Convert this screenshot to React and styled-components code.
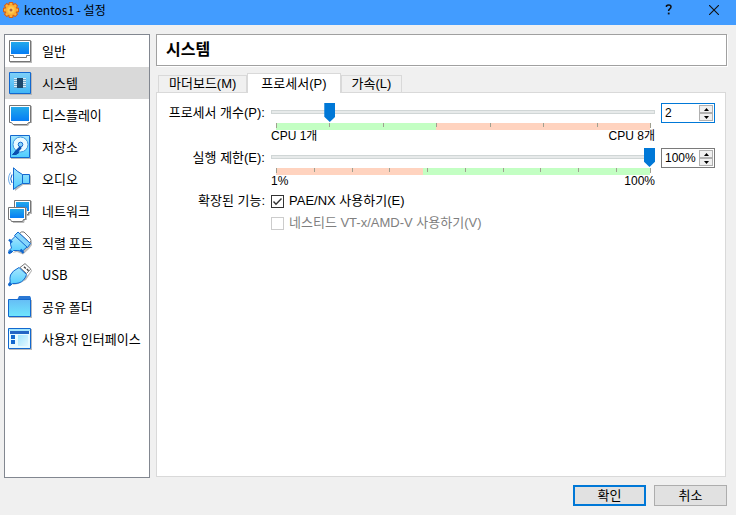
import React, { useState } from 'react'
import styled, { createGlobalStyle } from 'styled-components'

const Colors = {
    TITLE: '#429cff',
    WINDOW: '#f0f0f0',
    ACCENT: '#0078d7',
    GREEN: '#c3ffc3',
    RED: '#ffd3bf',
    LINE: '#d9d9d9',
}

const GREY = '#757575'
const BLUE = '#1268cf'

const TABS = [
    { id: 'motherboard', title: '마더보드(M)' },
    { id: 'processor', title: '프로세서(P)' },
    { id: 'acceleration', title: '가속(L)' },
]

const SECTIONS = [
    { id: 'general', title: '일반', icon: <GeneralIcon /> },
    { id: 'system', title: '시스템', icon: <SystemIcon /> },
    { id: 'display', title: '디스플레이', icon: <DisplayIcon /> },
    { id: 'storage', title: '저장소', icon: <StorageIcon /> },
    { id: 'audio', title: '오디오', icon: <AudioIcon /> },
    { id: 'network', title: '네트워크', icon: <NetworkIcon /> },
    { id: 'serial', title: '직렬 포트', icon: <SerialIcon /> },
    { id: 'usb', title: 'USB', icon: <UsbIcon /> },
    { id: 'shared', title: '공유 폴더', icon: <FolderIcon /> },
    { id: 'ui', title: '사용자 인터페이스', icon: <InterfaceIcon /> },
]

const CPU_TICKS = [1, 2, 3, 4, 5, 6, 7, 8]
const CAP_TICKS = [1, 11, 21, 31, 41, 51, 61, 71, 81, 91, 100]

export default function App() {
    const [section, setSection] = useState('system')
    const [tab, setTab] = useState('processor')
    const [cpus, setCpus] = useState(2)
    const [cap, setCap] = useState(100)
    const [pae, setPae] = useState(true)

    return (
        <Window>
            <GlobalStyle />
            <Gradients />
            <TitleBar>
                <GearIcon />
                <Caption>kcentos1 - 설정</Caption>
                <TitleButton aria-label="도움말">
                    <svg width="8" height="11" viewBox="0 0 8 11" fill="none" stroke="#111" strokeWidth="1.5">
                        <path d="M1.5 3V1.8Q2.2 1 3.8 1Q6 1 6 2.8Q6 4 4.8 4.8Q3.6 5.6 3.6 7" />
                        <path d="M2.8 9.5h1.8" strokeWidth="1.8" />
                    </svg>
                </TitleButton>
                <TitleButton aria-label="닫기">
                    <svg width="10" height="10" viewBox="0 0 10 10" stroke="#111" strokeWidth="1.1">
                        <path d="M0 0L10 10M10 0L0 10" />
                    </svg>
                </TitleButton>
            </TitleBar>

            <Main>
                <Sidebar>
                    {SECTIONS.map(item => (
                        <SectionButton
                            key={item.id}
                            $active={item.id === section}
                            aria-current={item.id === section}
                            onClick={() => setSection(item.id)}
                        >
                            {item.icon}
                            {item.title}
                        </SectionButton>
                    ))}
                </Sidebar>

                <Content>
                    <Heading>시스템</Heading>
                    <TabList role="tablist">
                        {TABS.map(item => (
                            <Tab
                                key={item.id}
                                role="tab"
                                aria-selected={item.id === tab}
                                $active={item.id === tab}
                                onClick={() => setTab(item.id)}
                            >
                                {item.title}
                            </Tab>
                        ))}
                    </TabList>
                    <Panel role="tabpanel">
                        <RangeRow
                            id="cpus"
                            label="프로세서 개수(P):"
                            min={1}
                            max={8}
                            value={cpus}
                            onChange={setCpus}
                            ticks={CPU_TICKS}
                            limit={4}
                            colors={[Colors.GREEN, Colors.RED]}
                            minLabel="CPU 1개"
                            maxLabel="CPU 8개"
                            focused
                        />
                        <RangeRow
                            id="cap"
                            label="실행 제한(E):"
                            min={1}
                            max={100}
                            value={cap}
                            onChange={setCap}
                            ticks={CAP_TICKS}
                            limit={40}
                            colors={[Colors.RED, Colors.GREEN]}
                            minLabel="1%"
                            maxLabel="100%"
                            suffix="%"
                        />
                        <Row>
                            <RowTitle>확장된 기능:</RowTitle>
                            <Options>
                                <Option>
                                    <CheckBox checked={pae} onChange={e => setPae(e.target.checked)} />
                                    PAE/NX 사용하기(E)
                                </Option>
                                <Option $disabled>
                                    <CheckBox disabled />
                                    네스티드 VT-x/AMD-V 사용하기(V)
                                </Option>
                            </Options>
                        </Row>
                    </Panel>
                </Content>
            </Main>

            <Footer>
                <DialogButton $primary>확인</DialogButton>
                <DialogButton>취소</DialogButton>
            </Footer>
        </Window>
    )
}

function RangeRow({
    id,
    label,
    min,
    max,
    value,
    onChange,
    ticks,
    limit,
    colors,
    minLabel,
    maxLabel,
    suffix = '',
    focused,
}) {
    const percent = (v) => (v - min) / (max - min) * 100
    const change = (v) => {
        const next = Number.isNaN(v) ? min : v
        onChange(Math.min(max, Math.max(min, next)))
    }

    return (
        <Row>
            <RowLabel htmlFor={id}>{label}</RowLabel>
            <div>
                <Slider
                    id={id}
                    min={min}
                    max={max}
                    value={value}
                    onChange={e => change(Number(e.target.value))}
                />
                <Scale style={{ background: `linear-gradient(90deg, ${colors[0]} ${percent(limit)}%, ${colors[1]} 0)` }}>
                    {ticks.map(tick => (
                        <Tick
                            key={tick}
                            $long={tick === min || tick === max}
                            style={{ left: `${percent(tick)}%` }}
                        />
                    ))}
                </Scale>
                <Limits>
                    <span>{minLabel}</span>
                    <span>{maxLabel}</span>
                </Limits>
            </div>
            <SpinBox $focused={focused}>
                <SpinInput
                    aria-label={label}
                    value={`${value}${suffix}`}
                    onChange={e => change(parseInt(e.target.value, 10))}
                />
                <Steps>
                    <Step aria-label="증가" onClick={() => change(value + 1)}>
                        <svg width="5" height="3" viewBox="0 0 5 3"><path d="M0 3L2.5 0L5 3z" /></svg>
                    </Step>
                    <Step aria-label="감소" onClick={() => change(value - 1)}>
                        <svg width="5" height="3" viewBox="0 0 5 3"><path d="M0 0L2.5 3L5 0z" /></svg>
                    </Step>
                </Steps>
            </SpinBox>
        </Row>
    )
}

function CheckBox(props) {
    return (
        <CheckHolder>
            <CheckInput {...props} />
            {props.checked && (
                <CheckMark viewBox="0 0 13 13">
                    <path d="M2.5 6.5L5 9.2L10.5 3.5" fill="none" stroke="#333" strokeWidth="1.4" />
                </CheckMark>
            )}
        </CheckHolder>
    )
}

function Gradients() {
    return (
        <Defs aria-hidden="true">
            <defs>
                <linearGradient id="screen" x1="0" y1="0" x2="0" y2="1">
                    <stop offset="0" stopColor="#22a9ea" />
                    <stop offset="1" stopColor="#067df5" />
                </linearGradient>
                <linearGradient id="sky" x1="0" y1="0" x2="0" y2="1">
                    <stop offset="0" stopColor="#7fd0f8" />
                    <stop offset="1" stopColor="#3fb6f6" />
                </linearGradient>
                <linearGradient id="cyan" x1="0" y1="0" x2="0" y2="1">
                    <stop offset="0" stopColor="#a6e6fd" />
                    <stop offset="1" stopColor="#4fcdff" />
                </linearGradient>
                <linearGradient id="folder" x1="0" y1="0" x2="0" y2="1">
                    <stop offset="0" stopColor="#66bdf5" />
                    <stop offset="1" stopColor="#6fe6fd" />
                </linearGradient>
                <linearGradient id="pane" x1="0" y1="0" x2="1" y2="1">
                    <stop offset="0" stopColor="#9fe4fd" />
                    <stop offset="1" stopColor="#e2f7ff" />
                </linearGradient>
                <radialGradient id="gear">
                    <stop offset="0" stopColor="#ffe58a" />
                    <stop offset="0.6" stopColor="#ffc341" />
                    <stop offset="1" stopColor="#f9a02c" />
                </radialGradient>
            </defs>
        </Defs>
    )
}

function GearIcon() {
    return (
        <svg width="18" height="18" viewBox="0 0 18 18">
            <circle cx="9" cy="9" r="7" fill="#d4601a" />
            <g stroke="#d4601a" strokeWidth="4.4">
                <path d="M9 1V17M1 9H17M3.3 3.3L14.7 14.7M14.7 3.3L3.3 14.7" />
            </g>
            <g stroke="#ffb638" strokeWidth="2.6">
                <path d="M9 2V16M2 9H16M4 4L14 14M14 4L4 14" />
            </g>
            <circle cx="9" cy="9" r="5.6" fill="url(#gear)" />
            <circle cx="9" cy="9" r="1.5" fill="#b9683a" />
        </svg>
    )
}

function GeneralIcon() {
    return (
        <Icon>
            <path d="M2 2h22v22H2z" fill="#bbb" />
            <path d="M1.5 1.5h21v21h-21z" fill="#fff" stroke={GREY} />
            <path d="M3 3h18v12H3z" fill="url(#screen)" />
            <path d="M1.5 16.5H5.5V18.5H18.5V16.5H22.5" fill="none" stroke={GREY} />
        </Icon>
    )
}

function SystemIcon() {
    return (
        <Icon>
            <path d="M2 2h22v22H2z" fill="#b5b5b5" />
            <path d="M1.5 1.5h21v21h-21z" fill="url(#sky)" stroke={BLUE} />
            <path d="M6 7.5h12M6 9.5h12M6 11.5h12M6 13.5h12M6 15.5h12" stroke="#d9eaf4" />
            <path d="M6 8.5h12M6 10.5h12M6 12.5h12M6 14.5h12M6 16.5h12" stroke="#6fa9cc" />
            <path d="M9 7h6v10H9z" fill="#1c476b" />
        </Icon>
    )
}

function DisplayIcon() {
    return (
        <Icon>
            <path d="M2 3h22v17h-2l-2 3H6z" fill="#bbb" />
            <path d="M1.5 2.5h21v17h-2l-1.5 2h-14l-1.5 -2h-2z" fill="#fff" stroke={GREY} />
            <path d="M3 4h18v14H3z" fill="url(#screen)" />
        </Icon>
    )
}

function StorageIcon() {
    return (
        <Icon>
            <path d="M3 2h20v22H3z" fill="#bbb" />
            <path d="M2.5 .5h19v22h-19z" fill="url(#cyan)" stroke={BLUE} />
            <circle cx="12.5" cy="9.5" r="7.5" fill="#e8faff" stroke="#3d97e0" />
            <circle cx="12.5" cy="9.5" r="2.3" fill="#8ad5fa" stroke={BLUE} />
            <path d="M12 13L8 17" stroke="#0b4fb0" strokeWidth="3" strokeLinecap="round" />
            <path d="M8.5 15.5L4.5 19.5H8L11 17.5z" fill="#0b4fb0" stroke="#0b4fb0" strokeLinejoin="round" />
        </Icon>
    )
}

function AudioIcon() {
    return (
        <Icon>
            <path d="M7 2L15 8.5H23V18H15L7 24z" fill="#bbb" />
            <path d="M5.5 .8Q9 4.5 14.5 7.5H21.5V16.5H14.5Q9 19 5.5 22.5z" fill="url(#cyan)" stroke={BLUE} />
            <path d="M14.5 7.5V16.5" stroke={BLUE} />
            <path d="M4 7.5Q1.5 12 4 16" fill="none" stroke={BLUE} />
            <path d="M2.5 5.5Q-1.5 12 2.5 18" fill="none" stroke="#6aa9e8" />
        </Icon>
    )
}

function NetworkIcon() {
    return (
        <Icon>
            <path d="M7 2h17v13h-2l-1 2H9z" fill="#bbb" />
            <path d="M6.5 1.5h16v12h-2v2h-14z" fill="#fff" stroke={GREY} />
            <path d="M8 3h13v9H8z" fill="url(#screen)" />
            <path d="M1 9h18v12h-2l-1 3H5z" fill="#bbb" />
            <path d="M.5 8.5h17v12h-2l-1 2h-11l-1-2h-2z" fill="#fff" stroke={GREY} />
            <path d="M2 10h14v9H2z" fill="url(#screen)" />
        </Icon>
    )
}

function SerialIcon() {
    return (
        <Icon>
            <path d="M4 22L9 21L15 23.5L21 18L24 14V10z" fill="#bbb" />
            <path d="M11.5 2.5Q13.5 0 16 1L22 7Q24 9.5 22 12z" fill="#fff" stroke={GREY} />
            <path d="M7.5 5L2.5 10Q2 13 3.5 17L1 19.5V22H3L5.5 19.5Q10 19 14 20.5L19.5 15.5z" fill="url(#cyan)" stroke={BLUE} />
            <path d="M6.5 4.5L10 1L22.5 12.5L19.5 16.5z" fill="#86d5fc" stroke={BLUE} strokeLinejoin="round" />
            <path d="M1 8.5L4 11.5M12.5 18.5L15.5 22M.5 22.5L3.5 19.5" stroke={BLUE} strokeWidth="2.4" />
        </Icon>
    )
}

function UsbIcon() {
    return (
        <Icon>
            <path d="M4 22L10 21L18 17L24 8V6L20 12z" fill="#bbb" />
            <path d="M12 4.5L17 .6L22.8 6L18.5 10.5z" fill="#fff" stroke={GREY} strokeLinejoin="round" />
            <path d="M16 3.7l1.8 1.8M18.8 6l1.8 1.8" stroke="#444" strokeWidth="1.5" />
            <path d="M11 4.5Q4 8 2.5 12Q1.5 15 2.2 19L.8 21L2.5 22.5L4.5 20.5Q12 21 15.5 17Q18 14 18.5 11.5z" fill="url(#cyan)" stroke={BLUE} strokeLinejoin="round" />
            <path d="M.5 22.5L3 20" stroke={BLUE} strokeWidth="2.5" />
        </Icon>
    )
}

function FolderIcon() {
    return (
        <Icon>
            <path d="M1 5h23v18H1z" fill="#bbb" />
            <path d="M9 5L11 1H22L23 3V6H9z" fill="#2b78d4" />
            <path d="M.5 4.5h22v17H.5z" fill="url(#folder)" stroke={BLUE} />
        </Icon>
    )
}

function InterfaceIcon() {
    return (
        <Icon>
            <path d="M1 2h23v21H1z" fill="#bbb" />
            <path d="M.5 1.5h22v20H.5z" fill="#e6faff" stroke={BLUE} />
            <path d="M1 2h21v2H1z" fill="#a5e6fc" />
            <path d="M2 4h19v3H2z" fill="#2365c4" />
            <path d="M3 8h4v4H3zM3 13h4v4H3z" fill={BLUE} />
            <path d="M10 8h10v11H10z" fill="url(#pane)" />
        </Icon>
    )
}

const GlobalStyle = createGlobalStyle`
    * {
        box-sizing: border-box;
    }

    body {
        margin: 0;
        background: ${Colors.WINDOW};
    }

    body, button, input {
        color: #000;
        font-family: 'Liberation Sans', 'Noto Sans CJK KR', sans-serif;
        font-size: 13px;
        line-height: 16px;
    }
`

const Window = styled.div`
    min-height: 100vh;
    display: flex;
    flex-direction: column;
    background: ${Colors.WINDOW};
`

const Defs = styled.svg`
    position: absolute;
    width: 0;
    height: 0;
`

const TitleBar = styled.header`
    height: 25px;
    padding: 0 0 6px 2px;
    display: flex;
    align-items: center;
    background: ${Colors.TITLE};
`

const Caption = styled.h1`
    flex: 1;
    margin: 0 0 0 4px;
    font-family: 'Noto Sans CJK KR', sans-serif;
    font-size: 12px;
    font-weight: 400;
`

const TitleButton = styled.button`
    width: 45px;
    padding: 0;
    border: 0;
    display: flex;
    justify-content: center;
    background: none;
`

const Main = styled.main`
    flex: 1;
    padding: 9px 9px 0 4px;
    display: flex;
    gap: 6px;
`

const Sidebar = styled.nav`
    width: 146px;
    border: 1px solid #828790;
    background: #fff;
`

const SectionButton = styled.button`
    width: 100%;
    height: 32px;
    padding: 0 3px;
    border: 0;
    display: flex;
    align-items: center;
    gap: 10px;
    background: ${props => props.$active ? '#d9d9d9' : 'none'};
    font-family: 'Noto Sans CJK KR', sans-serif;
    text-align: left;
    white-space: nowrap;
`

const Icon = styled.svg.attrs({
    viewBox: '0 0 24 24',
})`
    width: 24px;
    height: 24px;
    flex: none;
`

const Content = styled.section`
    flex: 1;
    min-width: 0;
    display: flex;
    flex-direction: column;
`

const Heading = styled.h2`
    height: 32px;
    margin: 0 0 7px;
    padding: 0 9px;
    border: 1px solid #a0a0a0;
    background: #fff;
    box-shadow: 1px 1px 0 #fff;
    font-size: 16px;
    line-height: 30px;
`

const TabList = styled.div`
    padding-left: 2px;
    display: flex;
    align-items: flex-end;
`

const Tab = styled.button`
    height: ${props => props.$active ? 20 : 17}px;
    padding: ${props => props.$active ? '0 13px' : '0 10px'};
    margin-bottom: ${props => props.$active ? -1 : 0}px;
    border: 1px solid ${Colors.LINE};
    border-bottom: 0;
    background: ${props => props.$active ? '#fff' : Colors.WINDOW};
    z-index: ${props => props.$active ? 1 : 0};

    & + & {
        border-left-width: ${props => props.$active ? 1 : 0}px;
    }
`

const Panel = styled.div`
    flex: 1;
    margin: 0 1px 1px 0;
    padding: 10px;
    border: 1px solid ${Colors.LINE};
    display: flex;
    flex-direction: column;
    gap: 6px;
    background: #fff;
`

const Row = styled.div`
    display: grid;
    grid-template-columns: 98px 1fr 54px;
    gap: 6px;
    align-items: start;
`

const RowLabel = styled.label`
    line-height: 20px;
    text-align: right;
    white-space: nowrap;
`

const RowTitle = styled.span`
    text-align: right;
`

const Slider = styled.input.attrs({
    type: 'range',
})`
    appearance: none;
    display: block;
    width: 100%;
    height: 18px;
    margin: 0 0 2px;
    background: none;

    &::-webkit-slider-runnable-track {
        height: 4px;
        background: #e7eaea;
        box-shadow: inset 0 0 0 1px #d0d6d6;
    }

    &::-webkit-slider-thumb {
        appearance: none;
        width: 11px;
        height: 19px;
        margin-top: -7px;
        background: ${Colors.ACCENT};
        clip-path: polygon(0 0, 100% 0, 100% 72%, 50% 100%, 0 72%);
    }
`

const Scale = styled.div`
    position: relative;
    height: 7px;
    margin: 0 5px;
`

const Tick = styled.i`
    position: absolute;
    top: 0;
    width: 1px;
    height: ${props => props.$long ? 5 : 4}px;
    background: #a0a090;
`

const Limits = styled.div`
    display: flex;
    justify-content: space-between;
    font-size: 12px;
    line-height: 12px;
`

const SpinBox = styled.div`
    height: 20px;
    padding: 1px;
    border: 1px solid ${props => props.$focused ? Colors.ACCENT : '#7a7a7a'};
    display: flex;
    background: #fff;
`

const SpinInput = styled.input`
    flex: 1;
    min-width: 0;
    padding: 0 0 0 2px;
    border: 0;
    outline: 0;
    font-size: 12px;
`

const Steps = styled.div`
    width: 14px;
    display: flex;
    flex-direction: column;
`

const Step = styled.button`
    flex: 1;
    padding: 0;
    border: 1px solid #b0b0b0;
    display: flex;
    align-items: center;
    justify-content: center;
    background: ${Colors.WINDOW};
`

const Options = styled.div`
    display: flex;
    flex-direction: column;
    gap: 6px;
`

const Option = styled.label`
    display: flex;
    align-items: center;
    gap: 5px;
    color: ${props => props.$disabled ? '#7f7f7f' : '#000'};
    white-space: nowrap;
`

const CheckHolder = styled.span`
    position: relative;
    width: 13px;
    height: 13px;
`

const CheckInput = styled.input.attrs({
    type: 'checkbox',
})`
    appearance: none;
    display: block;
    width: 13px;
    height: 13px;
    margin: 0;
    border: 1px solid #333;
    background: #fff;

    &:disabled {
        border-color: #ccc;
    }
`

const CheckMark = styled.svg`
    position: absolute;
    inset: 0;
    pointer-events: none;
`

const Footer = styled.footer`
    padding: 7px 9px 9px;
    display: flex;
    justify-content: flex-end;
    gap: 8px;
`

const DialogButton = styled.button`
    width: 73px;
    height: 21px;
    padding: 0;
    border: ${props => props.$primary ? `2px solid ${Colors.ACCENT}` : '1px solid #adadad'};
    background: #e1e1e1;
`
